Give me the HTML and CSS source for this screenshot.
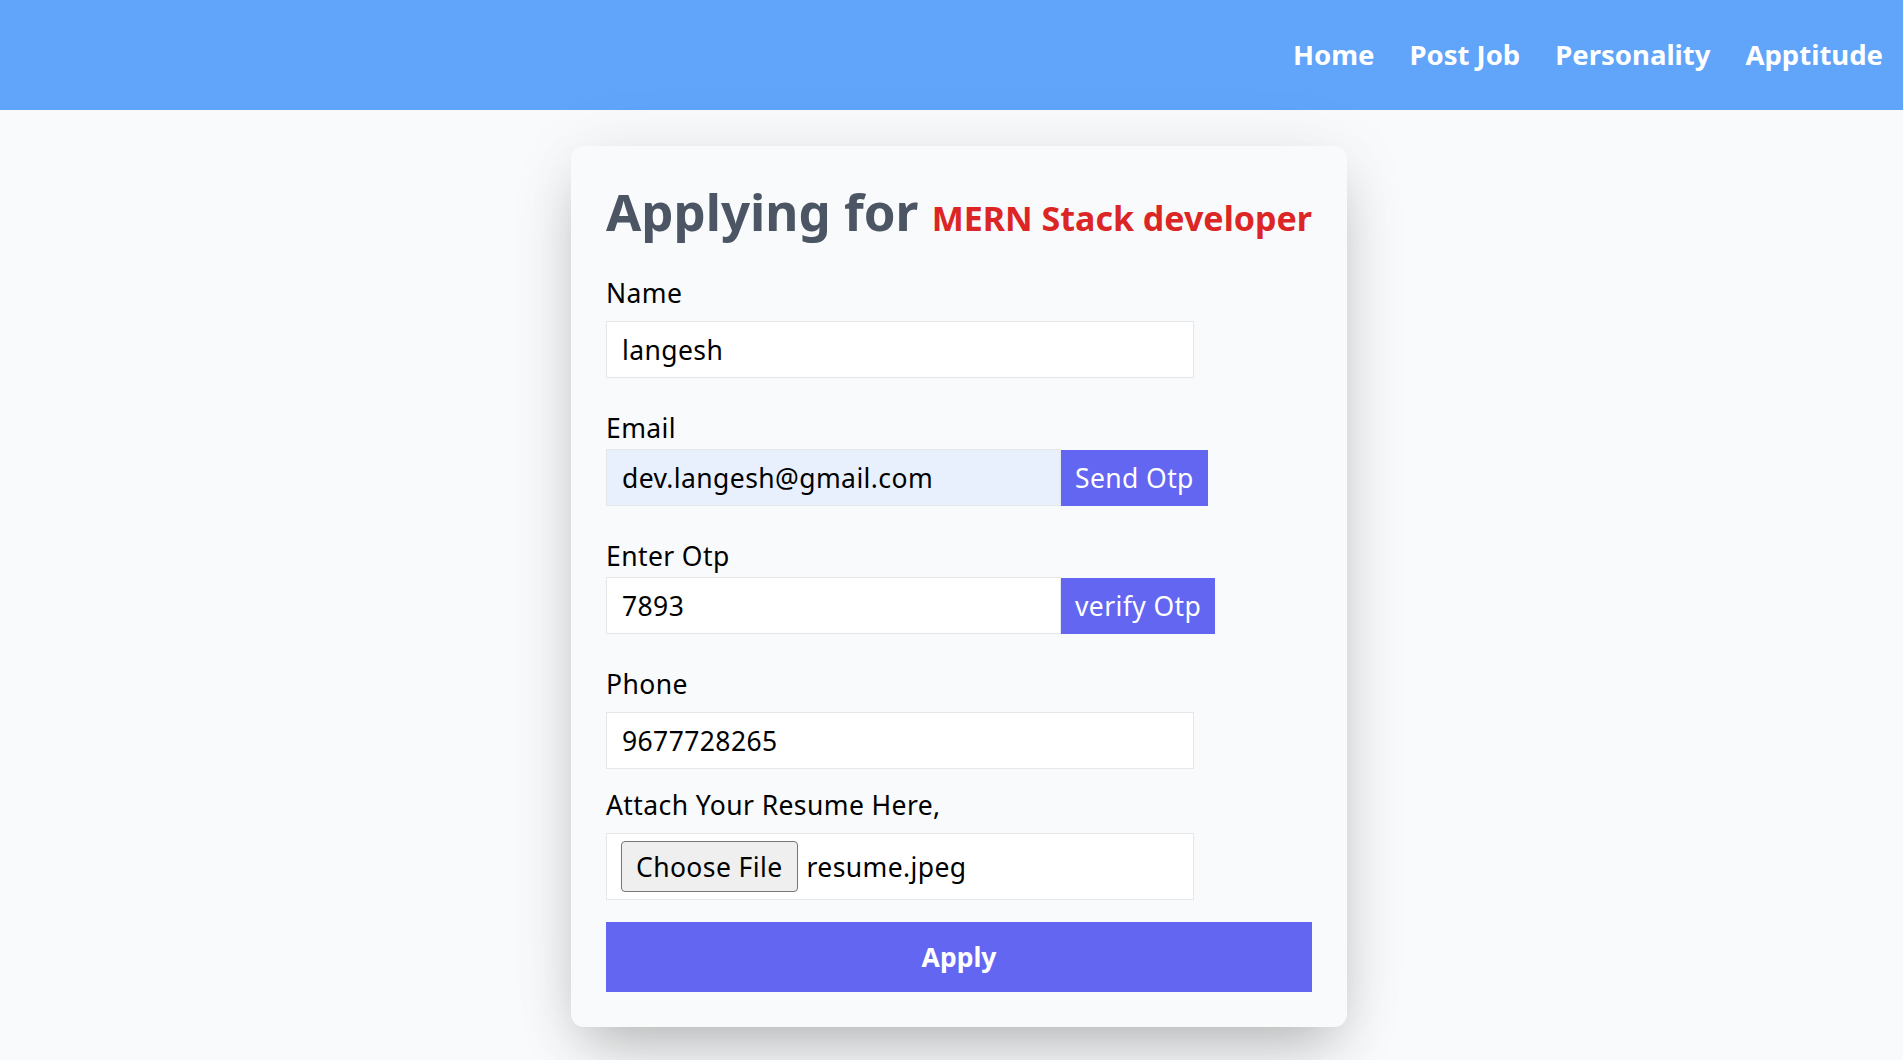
FILE: index.html
```html
<!DOCTYPE html>
<html lang="en">
<head>
<meta charset="utf-8">
<title>Apply</title>
<link rel="stylesheet" href="styles.css">
</head>
<body>
<nav class="navbar">
  <ul class="nav-links">
    <li><a href="#">Home</a></li>
    <li><a href="#">Post Job</a></li>
    <li><a href="#">Personality</a></li>
    <li><a href="#">Apptitude</a></li>
  </ul>
</nav>
<main class="page">
  <form class="card">
    <h1 class="title">Applying for <span class="job">MERN Stack developer</span></h1>

    <div class="field field-first">
      <label class="label">Name</label>
      <input class="input input-wide" type="text" value="langesh">
    </div>

    <div class="field field-row">
      <label class="label">Email</label>
      <div class="row">
        <input class="input input-short autofill" type="text" value="dev.langesh@gmail.com">
        <button type="button" class="btn-side">Send Otp</button>
      </div>
    </div>

    <div class="field field-row">
      <label class="label">Enter Otp</label>
      <div class="row">
        <input class="input input-short" type="text" value="7893">
        <button type="button" class="btn-side">verify Otp</button>
      </div>
    </div>

    <div class="field">
      <label class="label">Phone</label>
      <input class="input input-wide" type="text" value="9677728265">
    </div>

    <div class="field field-attach">
      <label class="label">Attach Your Resume Here,</label>
      <div class="file-box">
        <button type="button" class="file-btn">Choose File</button>
        <span class="file-name">resume.jpeg</span>
      </div>
    </div>

    <button type="button" class="apply">Apply</button>
  </form>
</main>
</body>
</html>
```

FILE: styles.css
```css
* {
  box-sizing: border-box;
}

body {
  margin: 0;
  background: #f9fafb;
  font-family: "Noto Sans", "DejaVu Sans", sans-serif;
  color: #000;
}

.navbar {
  height: 110px;
  background: #60a5fa;
  display: flex;
  justify-content: flex-end;
  align-items: center;
  padding-right: 20px;
}

.nav-links {
  list-style: none;
  margin: 0;
  padding: 0;
  display: flex;
  gap: 35px;
}

.nav-links a {
  color: #fff;
  text-decoration: none;
  font-weight: 700;
  font-size: 27.5px;
  line-height: 32px;
}

.page {
  display: flex;
  justify-content: center;
  padding: 36px 0 60px 15px;
}

.card {
  width: 776px;
  padding: 35px;
  background: #f9fafb;
  border-radius: 13px;
  box-shadow: 0 27px 55px -13px rgba(0, 0, 0, 0.27), 0 0 80px rgba(0, 0, 0, 0.05);
  display: flex;
  flex-direction: column;
  align-items: flex-start;
}

.title {
  margin: 0;
  font-size: 51px;
  line-height: 60px;
  font-weight: 700;
  color: #4b5563;
  white-space: nowrap;
}

.job {
  font-size: 34px;
  line-height: 1;
  color: #dc2626;
}

.field {
  display: flex;
  flex-direction: column;
  align-items: flex-start;
  margin-top: 34px;
}

.field-first {
  margin-top: 36px;
}

.field-attach {
  margin-top: 20px;
}

.label {
  font-size: 26.5px;
  letter-spacing: 0.4px;
  line-height: 32px;
  margin-bottom: 12px;
}

.field-row .label {
  margin-bottom: 5px;
}

.row {
  display: flex;
  align-items: center;
}

.input {
  height: 57px;
  border: 1px solid #e5e7eb;
  background: #fff;
  padding: 0 15px;
  font-family: inherit;
  font-size: 26.5px;
  letter-spacing: 0.4px;
  color: #000;
  outline: none;
  border-radius: 0;
}

.input-wide {
  width: 588px;
}

.input-short {
  width: 455px;
}

.autofill {
  background: #e8f0fe;
}

.btn-side {
  height: 56px;
  border: none;
  background: #6366f1;
  color: #fff;
  font-family: inherit;
  font-size: 26.5px;
  letter-spacing: 0.4px;
  padding: 0 14px;
  cursor: pointer;
}

.file-box {
  width: 588px;
  height: 67px;
  border: 1px solid #e5e7eb;
  background: #fff;
  display: flex;
  align-items: center;
  padding: 0 14px;
  gap: 9px;
}

.file-btn {
  height: 51px;
  padding: 0 14px;
  background: #efefef;
  border: 1px solid #767676;
  border-radius: 4px;
  font-family: inherit;
  font-size: 26.5px;
  letter-spacing: 0.4px;
  color: #000;
}

.file-name {
  font-size: 26.5px;
  letter-spacing: 0.4px;
}

.apply {
  margin-top: 22px;
  width: 100%;
  height: 70px;
  border: none;
  background: #6366f1;
  color: #fff;
  font-family: inherit;
  font-size: 26.5px;
  font-weight: 700;
  cursor: pointer;
}
```
